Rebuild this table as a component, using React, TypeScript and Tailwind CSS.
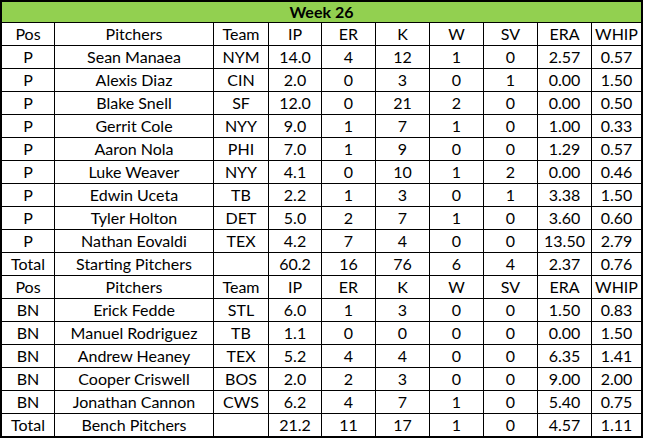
import React from 'react';

type Row = string[];

const header: Row = ['Pos', 'Pitchers', 'Team', 'IP', 'ER', 'K', 'W', 'SV', 'ERA', 'WHIP'];

const starters: Row[] = [
	['P', 'Sean Manaea', 'NYM', '14.0', '4', '12', '1', '0', '2.57', '0.57'],
	['P', 'Alexis Diaz', 'CIN', '2.0', '0', '3', '0', '1', '0.00', '1.50'],
	['P', 'Blake Snell', 'SF', '12.0', '0', '21', '2', '0', '0.00', '0.50'],
	['P', 'Gerrit Cole', 'NYY', '9.0', '1', '7', '1', '0', '1.00', '0.33'],
	['P', 'Aaron Nola', 'PHI', '7.0', '1', '9', '0', '0', '1.29', '0.57'],
	['P', 'Luke Weaver', 'NYY', '4.1', '0', '10', '1', '2', '0.00', '0.46'],
	['P', 'Edwin Uceta', 'TB', '2.2', '1', '3', '0', '1', '3.38', '1.50'],
	['P', 'Tyler Holton', 'DET', '5.0', '2', '7', '1', '0', '3.60', '0.60'],
	['P', 'Nathan Eovaldi', 'TEX', '4.2', '7', '4', '0', '0', '13.50', '2.79'],
	['Total', 'Starting Pitchers', '', '60.2', '16', '76', '6', '4', '2.37', '0.76'],
];

const bench: Row[] = [
	['BN', 'Erick Fedde', 'STL', '6.0', '1', '3', '0', '0', '1.50', '0.83'],
	['BN', 'Manuel Rodriguez', 'TB', '1.1', '0', '0', '0', '0', '0.00', '1.50'],
	['BN', 'Andrew Heaney', 'TEX', '5.2', '4', '4', '0', '0', '6.35', '1.41'],
	['BN', 'Cooper Criswell', 'BOS', '2.0', '2', '3', '0', '0', '9.00', '2.00'],
	['BN', 'Jonathan Cannon', 'CWS', '6.2', '4', '7', '1', '0', '5.40', '0.75'],
	['Total', 'Bench Pitchers', '', '21.2', '11', '17', '1', '0', '4.57', '1.11'],
];

const rows: Row[] = [header, ...starters, header, ...bench];

const App: React.FC = () => {
	return <div className="w-[646px] h-[438px] bg-white font-['Lato',sans-serif] text-[16px] text-black leading-none">
		<div className="w-[643px] border-2 border-black bg-black grid grid-cols-[52px_158px_54px_52px_53px_53px_53px_53px_53px_49px] gap-px">
			<div className="col-span-10 h-[20px] bg-[#92D050] flex items-center justify-center font-bold">
				Week 26
			</div>
			{rows.map((row, i) =>
				row.map((cell, j) => (
					<div key={`${i}-${j}`} className="h-[22px] bg-white flex items-center justify-center whitespace-nowrap">
						{cell}
					</div>
				))
			)}
		</div>
	</div>
};

export default App;
